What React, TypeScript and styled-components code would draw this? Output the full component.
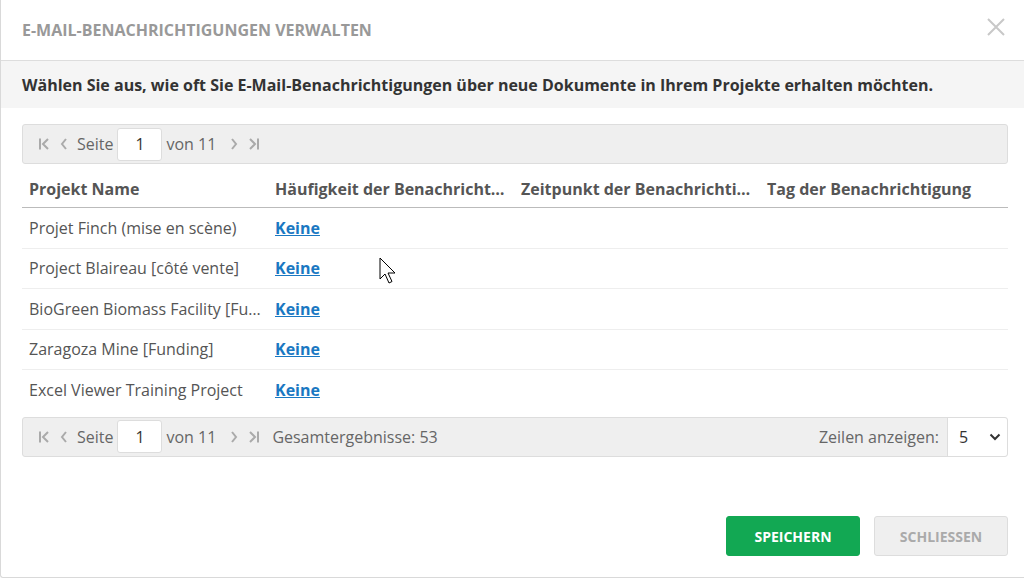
import React from "react";
import styled, { createGlobalStyle } from "styled-components";

const Global = createGlobalStyle`
  html, body { margin: 0; padding: 0; background: #fff; }
  body { font-family: "Open Sans", "Lato", sans-serif; }
  * { box-sizing: border-box; }
`;

const Modal = styled.div`
  position: relative;
  width: 1026px;
  height: 578px;
  border-left: 1px solid #d9d9d9;
  border-bottom: 1px solid #d9d9d9;
  border-bottom-left-radius: 3px;
  display: flex;
  flex-direction: column;
  background: #fff;
  overflow: hidden;
`;

const Header = styled.div`
  height: 61px;
  display: flex;
  align-items: center;
  justify-content: space-between;
  padding: 0 10px 0 21px;
  border-bottom: 1px solid #ddd;
`;

const Title = styled.h1`
  margin: 0;
  font-size: 16px;
  font-weight: 700;
  color: #999;
  text-transform: uppercase;
`;

const Close = styled.button`
  border: 0;
  background: none;
  padding: 0;
  width: 40px;
  height: 40px;
  display: flex;
  align-items: center;
  justify-content: center;
  margin-top: -6px;
  cursor: pointer;
`;

const Intro = styled.div`
  background: #f5f5f5;
  height: 47px;
  display: flex;
  align-items: center;
  padding: 0 21px;
  font-size: 16px;
  font-weight: 700;
  color: #333;
  white-space: nowrap;
`;

const Body = styled.div`
  padding: 16px 18px 0 21px;
  display: flex;
  flex-direction: column;
`;

const Pager = styled.div<{ $mt?: number }>`
  height: 40px;
  margin-top: ${(p) => p.$mt ?? 0}px;
  background: #efefef;
  border: 1px solid #ddd;
  border-radius: 3px;
  display: flex;
  align-items: center;
  padding: 0 0 0 11px;
  font-size: 16px;
  color: #666;
`;

const NavIcon = styled.span<{ $ml?: number }>`
  display: inline-flex;
  width: 20px;
  margin-left: ${(p) => p.$ml ?? 0}px;
  justify-content: center;
  color: #aaa;
`;

const PagerText = styled.span<{ $ml?: number; $mr?: number }>`
  margin-left: ${(p) => p.$ml ?? 0}px;
  margin-right: ${(p) => p.$mr ?? 0}px;
  white-space: nowrap;
`;

const PageInput = styled.div`
  width: 45px;
  height: 33px;
  background: #fff;
  border: 1px solid #ddd;
  border-radius: 3px;
  display: flex;
  align-items: center;
  justify-content: center;
  color: #333;
  margin: 0 4px 0 4px;
`;

const Spacer = styled.div`
  flex: 1;
`;

const Select = styled.div`
  width: 60px;
  align-self: stretch;
  background: #fff;
  border-left: 1px solid #ddd;
  border-radius: 0 3px 3px 0;
  display: flex;
  align-items: center;
  justify-content: space-between;
  padding: 0 6px 0 11px;
  color: #333;
  margin-left: 8px;
`;

const Table = styled.div`
  display: flex;
  flex-direction: column;
`;

const Row = styled.div<{ $head?: boolean }>`
  display: grid;
  grid-template-columns: repeat(4, 246px);
  height: ${(p) => (p.$head ? "44px" : "40.5px")};
  padding-bottom: ${(p) => (p.$head ? "7px" : "0")};
  border-bottom: 1px solid ${(p) => (p.$head ? "#bbb" : "#eee")};
  align-items: ${(p) => (p.$head ? "end" : "center")};
  &:last-child { border-bottom: 0; }
`;

const Cell = styled.div<{ $head?: boolean }>`
  padding: 0 7px;
  font-size: 16px;
  font-weight: ${(p) => (p.$head ? 700 : 400)};
  color: #555;
  white-space: nowrap;
  overflow: hidden;
  text-overflow: ellipsis;
`;

const Link = styled.a`
  color: #1a78c2;
  font-weight: 700;
  text-decoration: underline;
  cursor: pointer;
`;

const Footer = styled.div`
  margin-top: auto;
  display: flex;
  justify-content: flex-end;
  gap: 14px;
  padding: 0 18px 21px 0;
`;

const Button = styled.button<{ $primary?: boolean }>`
  width: 134px;
  height: 40px;
  border-radius: 3px;
  border: 1px solid ${(p) => (p.$primary ? "#12a853" : "#ddd")};
  background: ${(p) => (p.$primary ? "#12a853" : "#efefef")};
  color: ${(p) => (p.$primary ? "#fff" : "#aaa")};
  font-family: "Open Sans", sans-serif;
  font-size: 14px;
  font-weight: 700;
  text-transform: uppercase;
  cursor: pointer;
`;

const Cursor = styled.div`
  position: absolute;
  left: 378px;
  top: 257px;
  pointer-events: none;
`;

const First = () => (
  <svg width="12" height="14" viewBox="0 0 12 14">
    <path d="M2 1.5v11" stroke="#aaa" strokeWidth="2" />
    <path d="M10 2L5 7l5 5" stroke="#aaa" strokeWidth="2" fill="none" />
  </svg>
);
const Prev = () => (
  <svg width="10" height="14" viewBox="0 0 10 14">
    <path d="M7 2L3 7l4 5" stroke="#aaa" strokeWidth="2" fill="none" />
  </svg>
);
const Next = () => (
  <svg width="10" height="14" viewBox="0 0 10 14">
    <path d="M3 2l4 5-4 5" stroke="#aaa" strokeWidth="2" fill="none" />
  </svg>
);
const Last = () => (
  <svg width="12" height="14" viewBox="0 0 12 14">
    <path d="M2 2l5 5-5 5" stroke="#aaa" strokeWidth="2" fill="none" />
    <path d="M10 1.5v11" stroke="#aaa" strokeWidth="2" />
  </svg>
);

const PagerNav: React.FC<{ total?: boolean }> = ({ total }) => (
  <>
    <NavIcon><First /></NavIcon>
    <NavIcon><Prev /></NavIcon>
    <PagerText $ml={3}>Seite</PagerText>
    <PageInput>1</PageInput>
    <PagerText>von 11</PagerText>
    <NavIcon $ml={8}><Next /></NavIcon>
    <NavIcon><Last /></NavIcon>
    {total && <PagerText $ml={8}>Gesamtergebnisse: 53</PagerText>}
  </>
);

const rows = [
  "Projet Finch (mise en scène)",
  "Project Blaireau [côté vente]",
  "BioGreen Biomass Facility [Funding]",
  "Zaragoza Mine [Funding]",
  "Excel Viewer Training Project",
];

export default function App() {
  return (
    <>
      <Global />
      <Modal>
        <Header>
          <Title>E-Mail-Benachrichtigungen verwalten</Title>
          <Close aria-label="close">
            <svg width="20" height="20" viewBox="0 0 20 20">
              <path d="M2 2l16 16M18 2L2 18" stroke="#c8c8c8" strokeWidth="2" />
            </svg>
          </Close>
        </Header>
        <Intro>
          Wählen Sie aus, wie oft Sie E-Mail-Benachrichtigungen über neue Dokumente in Ihrem Projekte erhalten möchten.
        </Intro>
        <Body>
          <Pager>
            <PagerNav />
          </Pager>
          <Table>
            <Row $head>
              <Cell $head>Projekt Name</Cell>
              <Cell $head>Häufigkeit der Benachrichtigung</Cell>
              <Cell $head>Zeitpunkt der Benachrichtigung</Cell>
              <Cell $head>Tag der Benachrichtigung</Cell>
            </Row>
            {rows.map((r) => (
              <Row key={r}>
                <Cell>{r}</Cell>
                <Cell><Link>Keine</Link></Cell>
                <Cell />
                <Cell />
              </Row>
            ))}
          </Table>
          <Pager $mt={6}>
            <PagerNav total />
            <Spacer />
            <PagerText>Zeilen anzeigen:</PagerText>
            <Select>
              <span>5</span>
              <svg width="12" height="8" viewBox="0 0 12 8">
                <path d="M1.5 1.5L6 6l4.5-4.5" stroke="#333" strokeWidth="2" fill="none" />
              </svg>
            </Select>
          </Pager>
        </Body>
        <Footer>
          <Button $primary>Speichern</Button>
          <Button>Schliessen</Button>
        </Footer>
        <Cursor>
          <svg width="20" height="30" viewBox="0 0 20 30">
            <path d="M1 1v21l5-5 4 9 3-1.5-4-8.5h7z" fill="#fff" stroke="#000" strokeWidth="1" strokeLinejoin="round" />
          </svg>
        </Cursor>
      </Modal>
    </>
  );
}
